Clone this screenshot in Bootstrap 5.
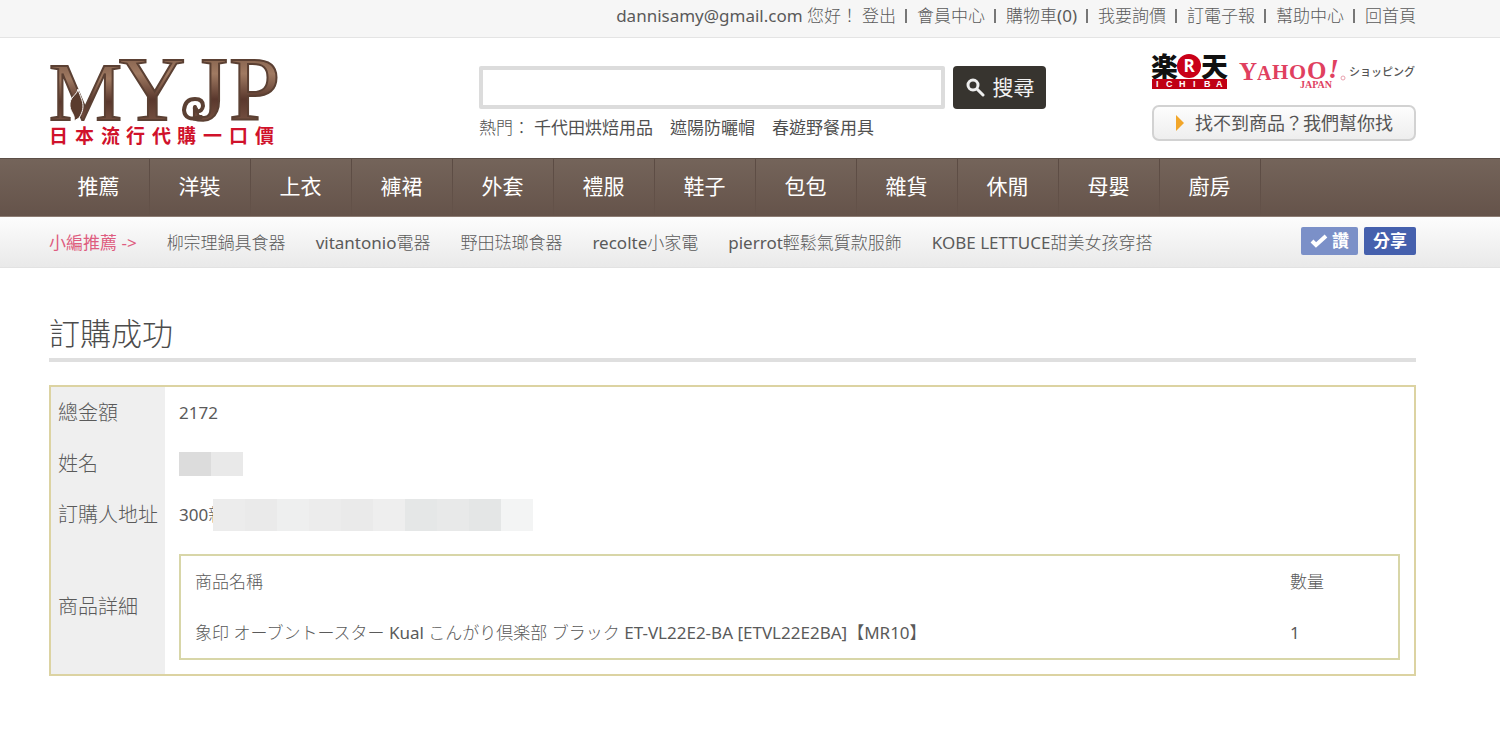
<!DOCTYPE html>
<html lang="zh-Hant">
<head>
<meta charset="utf-8">
<meta name="viewport" content="width=device-width, initial-scale=1">
<title>MYJP 訂購成功</title>
<link href="https://cdn.jsdelivr.net/npm/bootstrap@5.3.0/dist/css/bootstrap.min.css" rel="stylesheet">
<style>
body{font-family:"Noto Sans","Noto Sans CJK TC Light","Noto Sans CJK TC",sans-serif;font-size:17px;font-weight:400;line-height:24px;color:#5a5a5a;background:#fff}
a{color:inherit;text-decoration:none}
a:hover{color:#d6506f}
.page-wrap{padding-left:49px;padding-right:84px}
.topbar{background:#f6f6f6;border-bottom:1px solid #e4e4e4;padding:4px 0 9px}
.user-links li+li::before{content:"";display:inline-block;width:2px;height:14px;margin:0 10px 0 9px;background:#777;vertical-align:-1px}
.masthead{padding-top:8px;height:120px}
.brand-art{display:block;width:242px;height:100px;overflow:visible}
.search-area{width:567px;margin-left:188px;padding-top:20px}
.search-area .form-control{height:43px;border:4px solid #dcdcdc;border-radius:2px}
.search-btn,.help-btn,.hot-words a,.cats a,.pick-title,.fb-btn{font-family:"Noto Sans","Noto Sans CJK TC",sans-serif}
.search-btn{height:43px;width:93px;flex:none;background:#37342f;color:#f2f2f2;border-radius:4px;font-size:21px;line-height:24px;padding:0 0 2px}
.search-btn:hover{background:#222;color:#fff}
.hot-words{padding-top:7px;color:#505050}
.hot-words a+a{margin-left:17px}
.partner{width:264px;padding-top:7px}
.help-btn{height:36px;border:2px solid #d2d2d2;border-radius:7px;background:linear-gradient(#fdfdfd,#eee);font-size:18px;line-height:24px;color:#555;padding:0 0 1px}
.cats{background:linear-gradient(#74645a,#65534a);border-top:1px solid #5c4f47;border-bottom:1px solid #8d7d74}
.cats a{display:block;width:101px;padding:15px 1px 18px 0;color:#fff;font-size:21px;line-height:24px;text-align:center;border-right:1px solid;border-image:linear-gradient(#5b4b43,#65534a) 1}
.picks{background:linear-gradient(#fdfdfd,#e9e9e9);border-bottom:1px solid #e2e2e2;padding:10px 0 12px}
.picks ul{gap:30px;padding-top:3px}
.pick-title{color:#de5d80}
.share-row{gap:6px}
.fb-btn{height:28px;border-radius:2px;background:#4560ad;color:#fff;font-size:17px;font-weight:700;line-height:24px;padding:0}
.fb-btn:hover{background:#34509e;color:#fff}
.fb-like{background:#7b90c8}
h1{font-size:31px;font-weight:400;line-height:40px;margin:45px 0 23px;padding-bottom:5px;border-bottom:4px solid #dfdfdf;color:#4c4c4c}
.order{width:100%;border:2px solid #dcd3a2;border-collapse:separate;border-spacing:0}
.order>tbody>tr>th{width:114px;background:#efefef;font-size:20px;font-weight:400;white-space:nowrap;padding:0 7px}
.order>tbody>tr>td{height:51px;padding:0 14px}
.order>tbody>tr>td.detail-cell{padding:14px}
.items{width:100%;border:2px solid #d8d6a8;border-collapse:separate;border-spacing:0}
.items th,.items td{height:51px;padding:0 14px;font-weight:400}
.items .qty{width:122px}
.addr{width:34px;height:24px;overflow:hidden;white-space:nowrap}
.masked{display:flex}
.masked i{width:32px;height:32px}
.masked.short i{height:24px}
</style>
</head>
<body>
<div class="topbar">
  <div class="page-wrap d-flex justify-content-end">
    <span class="me-1">dannisamy@gmail.com 您好！</span>
    <ul class="user-links list-unstyled d-flex mb-0">
      <li><a href="#">登出</a></li><li><a href="#">會員中心</a></li><li><a href="#">購物車(0)</a></li><li><a href="#">我要詢價</a></li><li><a href="#">訂電子報</a></li><li><a href="#">幫助中心</a></li><li><a href="#">回首頁</a></li>
    </ul>
  </div>
</div>

<header class="page-wrap masthead d-flex">
  <a href="#" aria-label="MYJP 首頁">
    <svg class="brand-art" viewBox="0 0 242 100">
      <defs><linearGradient id="bronze" x1="0" y1="0" x2="0" y2="1"><stop offset="0" stop-color="#6b4b3a"/><stop offset=".35" stop-color="#a07a62"/><stop offset=".6" stop-color="#5a382d"/><stop offset="1" stop-color="#8a6450"/></linearGradient></defs>
      <g font-family="Liberation Serif, serif" font-size="92" fill="url(#bronze)" stroke="#5b4033" stroke-width="2">
        <text x="0" y="74" font-size="82">M</text><text x="70" y="74">Y</text><text x="143" y="74">J</text><text x="180" y="74">P</text>
      </g>
      <path d="M152 71q-16 5-17-7q1-11 11-11q8 0 8 7q-1 6-6 5q-3-1-2-4" fill="none" stroke="#5b4033" stroke-width="4" stroke-linecap="round"/>
      <path d="M29 43c3 11 9 16 1 29l-5 3c2-7-5-9-4-18c1-7 7-8 8-14z" fill="#5a3b2d" stroke="#fff" stroke-width="1"/>
      <text x="0 26 52 77 103 128 154 180 206" y="97" font-family="Noto Sans CJK TC, sans-serif" font-weight="700" font-size="19" fill="#d0122b">日本流行代購一口價</text>
    </svg>
  </a>

  <form class="search-area" role="search">
    <div class="d-flex gap-2">
      <input class="form-control" type="search" aria-label="搜尋商品">
      <button type="button" class="btn search-btn d-flex align-items-center justify-content-center gap-2">
        <svg width="20" height="20" viewBox="0 0 20 20" fill="none" stroke="#eee" stroke-width="3" stroke-linecap="round"><circle cx="8" cy="8" r="5"/><path d="M12 12l6 6"/></svg>搜尋
      </button>
    </div>
    <div class="hot-words d-flex"><span class="me-1">熱門：</span><a href="#">千代田烘焙用品</a><a href="#">遮陽防曬帽</a><a href="#">春遊野餐用具</a></div>
  </form>

  <div class="partner ms-auto">
    <div class="d-flex justify-content-between mb-3">
      <a href="#" aria-label="楽天市場">
        <svg class="d-block overflow-visible" width="76" height="36" viewBox="0 0 76 36">
          <g font-family="Noto Sans CJK JP, sans-serif" font-weight="900" font-size="27" fill="#111"><text x="-1" y="24">楽</text><text x="49" y="24">天</text></g>
          <circle cx="37" cy="13" r="12" fill="#c90018"/><text x="37" y="19" text-anchor="middle" font-family="Open Sans, sans-serif" font-weight="700" font-size="17" fill="#fff">R</text>
          <rect y="26" width="75" height="10" fill="#c00014"/><text x="4 14 27 41 52 64" y="34" font-family="Liberation Sans, sans-serif" font-weight="700" font-size="9" fill="#fff">ICHIBA</text>
        </svg>
      </a>
      <a href="#" aria-label="Yahoo Japan ショッピング">
        <svg class="d-block overflow-visible" width="177" height="36" viewBox="0 0 177 36">
          <g font-family="Liberation Serif, serif" font-weight="700" fill="#e0405f"><text x="0" y="27" font-size="25">Y</text><text x="18" y="27" font-size="20">A</text><text x="33" y="26" font-size="21">H</text><text x="50" y="26" font-size="22">O</text><text x="68" y="26" font-size="25">O</text><text x="89" y="25" font-size="28" font-style="italic">!</text><text x="61" y="35" font-size="10">JAPAN</text></g>
          <circle cx="104" cy="25" r="2" fill="none" stroke="#e9a0ae"/>
          <text x="110" y="23" font-family="Noto Sans CJK JP, sans-serif" font-weight="500" font-size="11" fill="#555">ショッピング</text>
        </svg>
      </a>
    </div>
    <button type="button" class="btn help-btn w-100 d-flex align-items-center justify-content-center">
      <svg class="me-2" width="12" height="16" viewBox="0 0 12 16"><path d="M1 0l8 8-8 8z" fill="#f2a629"/></svg>找不到商品？我們幫你找
    </button>
  </div>
</header>

<nav class="cats" aria-label="商品分類">
  <div class="page-wrap d-flex">
    <a href="#">推薦</a><a href="#">洋裝</a><a href="#">上衣</a><a href="#">褲裙</a><a href="#">外套</a><a href="#">禮服</a><a href="#">鞋子</a><a href="#">包包</a><a href="#">雜貨</a><a href="#">休閒</a><a href="#">母嬰</a><a href="#">廚房</a>
  </div>
</nav>

<div class="picks">
  <div class="page-wrap d-flex align-items-center justify-content-between">
    <ul class="list-unstyled d-flex mb-0">
      <li class="pick-title">小編推薦 -&gt;</li><li><a href="#">柳宗理鍋具食器</a></li><li><a href="#">vitantonio電器</a></li><li><a href="#">野田琺瑯食器</a></li><li><a href="#">recolte小家電</a></li><li><a href="#">pierrot輕鬆氣質款服飾</a></li><li><a href="#">KOBE LETTUCE甜美女孩穿搭</a></li>
    </ul>
    <div class="share-row d-flex">
      <button type="button" class="btn fb-btn fb-like px-2 d-flex align-items-center gap-1"><svg width="18" height="16" viewBox="0 0 18 16" fill="none" stroke="#fff" stroke-width="4"><path d="M2 8l4 4L16 3"/></svg>讚</button>
      <button type="button" class="btn fb-btn px-2">分享</button>
    </div>
  </div>
</div>

<main class="page-wrap">
  <h1>訂購成功</h1>
  <table class="order">
    <tbody>
      <tr><th scope="row">總金額</th><td>2172</td></tr>
      <tr><th scope="row">姓名</th><td><div class="masked short"><i style="background:#dcdcdc"></i><i style="background:#e9e9e9"></i></div></td></tr>
      <tr><th scope="row">訂購人地址</th><td><div class="d-flex align-items-center"><span class="addr">300新</span><div class="masked"><i style="background:#ececec"></i><i style="background:#eaeaea"></i><i style="background:#eeefef"></i><i style="background:#ececec"></i><i style="background:#eaeaea"></i><i style="background:#eeeeee"></i><i style="background:#e5e7e7"></i><i style="background:#e8e9e9"></i><i style="background:#e4e6e6"></i><i style="background:#f3f4f4"></i></div></div></td></tr>
      <tr><th scope="row">商品詳細</th><td class="detail-cell">
        <table class="items">
          <thead><tr><th scope="col">商品名稱</th><th scope="col" class="qty">數量</th></tr></thead>
          <tbody><tr><td>象印 オーブントースター Kual こんがり倶楽部 ブラック ET-VL22E2-BA [ETVL22E2BA]【MR10】</td><td class="qty">1</td></tr></tbody>
        </table>
      </td></tr>
    </tbody>
  </table>
</main>
<script src="https://cdn.jsdelivr.net/npm/bootstrap@5.3.0/dist/js/bootstrap.bundle.min.js"></script>
</body>
</html>
